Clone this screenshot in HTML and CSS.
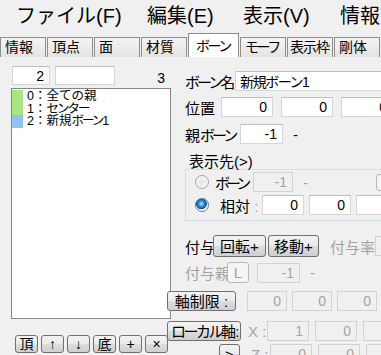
FILE: index.html
```html
<!DOCTYPE html>
<html>
  <head>
    <meta charset='utf-8'/>
    <title>PMX Editor</title>
    <link rel="stylesheet" href="styles.css">
  </head>
  <body>
    <div class='menubar'>
      <span>ファイル(F)</span>
      <span>編集(E)</span>
      <span>表示(V)</span>
      <span>情報</span>
    </div>

    <div class='tabs'>
      <div class='tab'>情報</div>
      <div class='tab'>頂点</div>
      <div class='tab'>面</div>
      <div class='tab'>材質</div>
      <div class='tab active'><span class='kana'>ボーン</span></div>
      <div class='tab'><span class='kana'>モーフ</span></div>
      <div class='tab wide-label'>表示枠</div>
      <div class='tab'>剛体</div>
    </div>

    <div class='page'>
      <div class='left'>
        <div class='top-row'>
          <input class='field num' type='text' value='2'>
          <input class='field num wide' type='text' value=''>
          <span class='count'>3</span>
        </div>
        <div class='list'>
          <div class='item'><span class='swatch green'></span>0：全ての親</div>
          <div class='item'><span class='swatch green'></span>1：<span class='kana'>センター</span></div>
          <div class='item'><span class='swatch blue'></span>2：新規<span class='kana'>ボーン</span>1</div>
        </div>
        <div class='tools'>
          <button>頂</button>
          <button>↑</button>
          <button>↓</button>
          <button>底</button>
          <button>+</button>
          <button>×</button>
        </div>
      </div>

      <div class='right'>
        <div class='row name-row'>
          <span class='label'><span class='kana'>ボーン</span>名</span>
          <input class='field name' type='text' value='新規ボーン1'>
        </div>
        <div class='row pos-row'>
          <span class='label'>位置</span>
          <input class='field' type='text' value='0'>
          <input class='field' type='text' value='0'>
          <input class='field' type='text' value='0'>
        </div>
        <div class='row parent-row'>
          <span class='label'>親<span class='kana'>ボーン</span></span>
          <input class='field' type='text' value='-1'>
          <span class='dash'>-</span>
        </div>

        <div class='group-title'>表示先(&gt;)</div>
        <div class='group'>
          <div class='row radio-row'>
            <span class='radio'></span>
            <span class='rlabel'><span class='kana tight'>ボーン</span><span class='dim'> :</span></span>
            <input class='field' type='text' value='-1' disabled>
            <span class='dash dim'>-</span>
            <button class='pick' disabled></button>
          </div>
          <div class='row radio-row rel'>
            <span class='radio on'></span>
            <span class='rlabel'>相対<span class='dim'> :</span></span>
            <input class='field' type='text' value='0'>
            <input class='field' type='text' value='0'>
            <input class='field' type='text' value='0'>
          </div>
        </div>

        <div class='row assign-row'>
          <span class='label'>付与</span>
          <button class='rot'>回転+</button>
          <button class='mov'>移動+</button>
          <span class='dim rate'>付与率</span>
          <input class='field' type='text' value='1' disabled>
        </div>
        <div class='row assign-parent-row'>
          <span class='label dim'>付与親</span>
          <button class='lbtn' disabled>L</button>
          <input class='field' type='text' value='-1' disabled>
          <span class='dash dim'>-</span>
        </div>
        <div class='row limit-row'>
          <button class='limit'>軸制限 :</button>
          <input class='field' type='text' value='0' disabled>
          <input class='field' type='text' value='0' disabled>
          <input class='field' type='text' value='0' disabled>
        </div>
        <div class='row local-row'>
          <button class='local'>ローカル軸 :</button>
          <span class='axis dim'>X :</span>
          <input class='field' type='text' value='1' disabled>
          <input class='field' type='text' value='0' disabled>
          <input class='field' type='text' value='0' disabled>
        </div>
        <div class='row z-row'>
          <button class='flip'>&gt;</button>
          <span class='axis dim'>Z :</span>
          <input class='field' type='text' value='0' disabled>
          <input class='field' type='text' value='0' disabled>
          <input class='field' type='text' value='1' disabled>
        </div>
      </div>
    </div>
  </body>
</html>
```

FILE: styles.css
```css
* {
  box-sizing: border-box;
}

body {
  margin: 0;
  width: 381px;
  height: 355px;
  overflow: hidden;
  background: #f0f0f0;
  color: #000;
  font-family: 'Liberation Sans', 'Noto Sans CJK JP', sans-serif;
}

/* katakana is much narrower in the original UI font */
.kana {
  letter-spacing: -3px;
}

.kana.tight {
  letter-spacing: -4px;
}

/* menu */

.menubar {
  display: flex;
  height: 33px;
  padding-left: 16px;
  font-size: 20px;
  line-height: 33px;
  white-space: nowrap;
}

.menubar span:nth-child(1) { width: 131px; }
.menubar span:nth-child(2) { width: 96px; }
.menubar span:nth-child(3) { width: 97px; }

/* tabs */

.tabs {
  display: flex;
  align-items: flex-end;
  height: 24px;
  font-size: 14px;
}

.tab {
  flex: none;
  width: 46px;
  height: 20px;
  margin-right: 1px;
  padding-left: 4px;
  line-height: 19px;
  border: 1px solid #8d8d8d;
  border-bottom: none;
  background: linear-gradient(#f5f5f5, #e3e3e3);
  white-space: nowrap;
  overflow: hidden;
}

.tab .kana {
  letter-spacing: -2.5px;
}

.tab.wide-label {
  padding-left: 2px;
  letter-spacing: -1px;
}

.tab.active {
  width: 51px;
  height: 24px;
  padding: 3px 0 0 7px;
  background: #fff;
}

/* page */

.page {
  display: flex;
  height: 298px;
  overflow: hidden;
}

.left {
  flex: none;
  width: 171px;
  padding: 9px 0 0 11px;
}

.top-row {
  display: flex;
  align-items: center;
  width: 160px;
  height: 19px;
}

.count {
  margin: 4px 6px 0 auto;
  font-size: 14px;
}

.field {
  flex: none;
  width: 52px;
  height: 20px;
  margin: 0;
  padding: 0 5px;
  border: 1px solid #d6d6d6;
  border-top-color: #bfbfbf;
  background: #fff;
  color: #000;
  font-family: 'Liberation Sans', 'Noto Sans CJK JP', sans-serif;
  font-size: 14px;
  text-align: right;
  outline: none;
}

.field:disabled {
  background: #f0f0f0;
  border-color: #d2d2d2;
  color: #a3a3a3;
}

.num {
  width: 38px;
  height: 19px;
  margin-left: 1px;
}

.num.wide {
  width: 60px;
  margin-left: 5px;
}

.list {
  width: 160px;
  height: 231px;
  margin-top: 3px;
  padding-top: 1px;
  background: #fff;
  border: 1px solid #828790;
  font-size: 12.5px;
  line-height: 12.5px;
}

.list .kana {
  letter-spacing: -2px;
}

.item {
  display: flex;
  align-items: center;
  height: 12.5px;
  white-space: nowrap;
}

.swatch {
  flex: none;
  width: 11px;
  height: 12.5px;
  margin-right: 4px;
}

.green { background: #a9e67f; }
.blue { background: #8fc3f4; }

button {
  flex: none;
  height: 20px;
  margin: 0;
  padding: 0;
  border: 1px solid #707070;
  border-radius: 3px;
  background: linear-gradient(#f3f3f3 0%, #ebebeb 48%, #dddddd 52%, #cfcfcf 100%);
  color: #000;
  font-family: 'Liberation Sans', 'Noto Sans CJK JP', sans-serif;
  font-size: 15px;
  line-height: 1;
  white-space: nowrap;
}

button:disabled {
  border-color: #b5b9bc;
  background: #f4f4f4;
  color: #a3a3a3;
}

.tools {
  display: flex;
  gap: 3px;
  margin-top: 16px;
  padding-left: 4px;
}

.tools button {
  width: 23px;
  height: 18px;
  font-size: 14px;
}

/* right side */

.right {
  flex: 1;
  min-width: 0;
  padding: 14px 0 0 14px;
  font-size: 15px;
  white-space: nowrap;
}

.row {
  display: flex;
  align-items: center;
  height: 20px;
}

.dim {
  color: #a3a3a3;
}

.dash {
  margin-left: 10px;
}

.name-row .label { width: 52px; }

.field.name {
  width: 150px;
  padding-left: 4px;
  letter-spacing: -1.5px;
  text-align: left;
}

.pos-row {
  margin-top: 6px;
  gap: 8px;
}

.pos-row .label { width: 28px; }

.parent-row {
  margin-top: 7px;
}

.parent-row .label { width: 55px; }
.parent-row .field { width: 43px; }

.group-title {
  height: 15px;
  margin-top: 10px;
  padding-left: 4px;
  line-height: 15px;
}

.group {
  width: 230px;
  height: 52px;
  padding: 2px 0 0 9px;
  border: 1px solid #d5dfe5;
}

.radio {
  flex: none;
  width: 14px;
  height: 14px;
  margin-right: 6px;
  border: 1px solid #a2a2a2;
  border-radius: 50%;
  background: radial-gradient(circle, #e4e4e4 0, #f2f2f2 55%, #fdfdfd 100%);
}

.radio.on {
  border-color: #5a7b9c;
  background: radial-gradient(circle at 45% 40%, #b4e2ff 0, #2f8ddb 30%, #0e4b8a 52%, #eef2f5 58%, #ffffff 100%);
}

.rlabel {
  width: 38px;
}

.rel {
  margin-top: 3px;
  gap: 5px;
}

.rel .rlabel {
  width: 37px;
}

.radio-row .field {
  width: 40px;
}

.rel .field {
  width: 42px;
}

.pick {
  width: 22px;
  height: 17px;
  margin-left: 68px;
}

.assign-row {
  height: 22px;
  margin-top: 14px;
}

.assign-row .label { width: 28px; }
.assign-row button { height: 22px; }
.rot { width: 53px; }
.mov { width: 51px; margin-left: 2px; }
.rate { margin-left: 11px; }

.assign-parent-row {
  height: 21px;
  margin-top: 5px;
}

.assign-parent-row .label {
  width: 42px;
  overflow: hidden;
}

.lbtn {
  width: 22px;
  height: 21px;
}

.assign-parent-row .field {
  width: 43px;
  margin-left: 8px;
}

.limit-row {
  margin: 8px 0 0 -18px;
  gap: 5px;
}

.limit {
  width: 69px;
  margin-right: 6px;
}

.limit-row .field { width: 40px; }

.local-row,
.z-row {
  height: 22px;
  gap: 6px;
}

.local-row {
  margin: 9px 0 0 -18px;
}

.local {
  width: 74px;
  letter-spacing: -2.5px;
}

.axis {
  width: 13px;
  margin-left: 1px;
}

.local-row .field,
.z-row .field {
  width: 42px;
}

.z-row {
  margin: 1px 0 0 34px;
}

.flip {
  width: 21px;
  margin-right: 4px;
}
```
